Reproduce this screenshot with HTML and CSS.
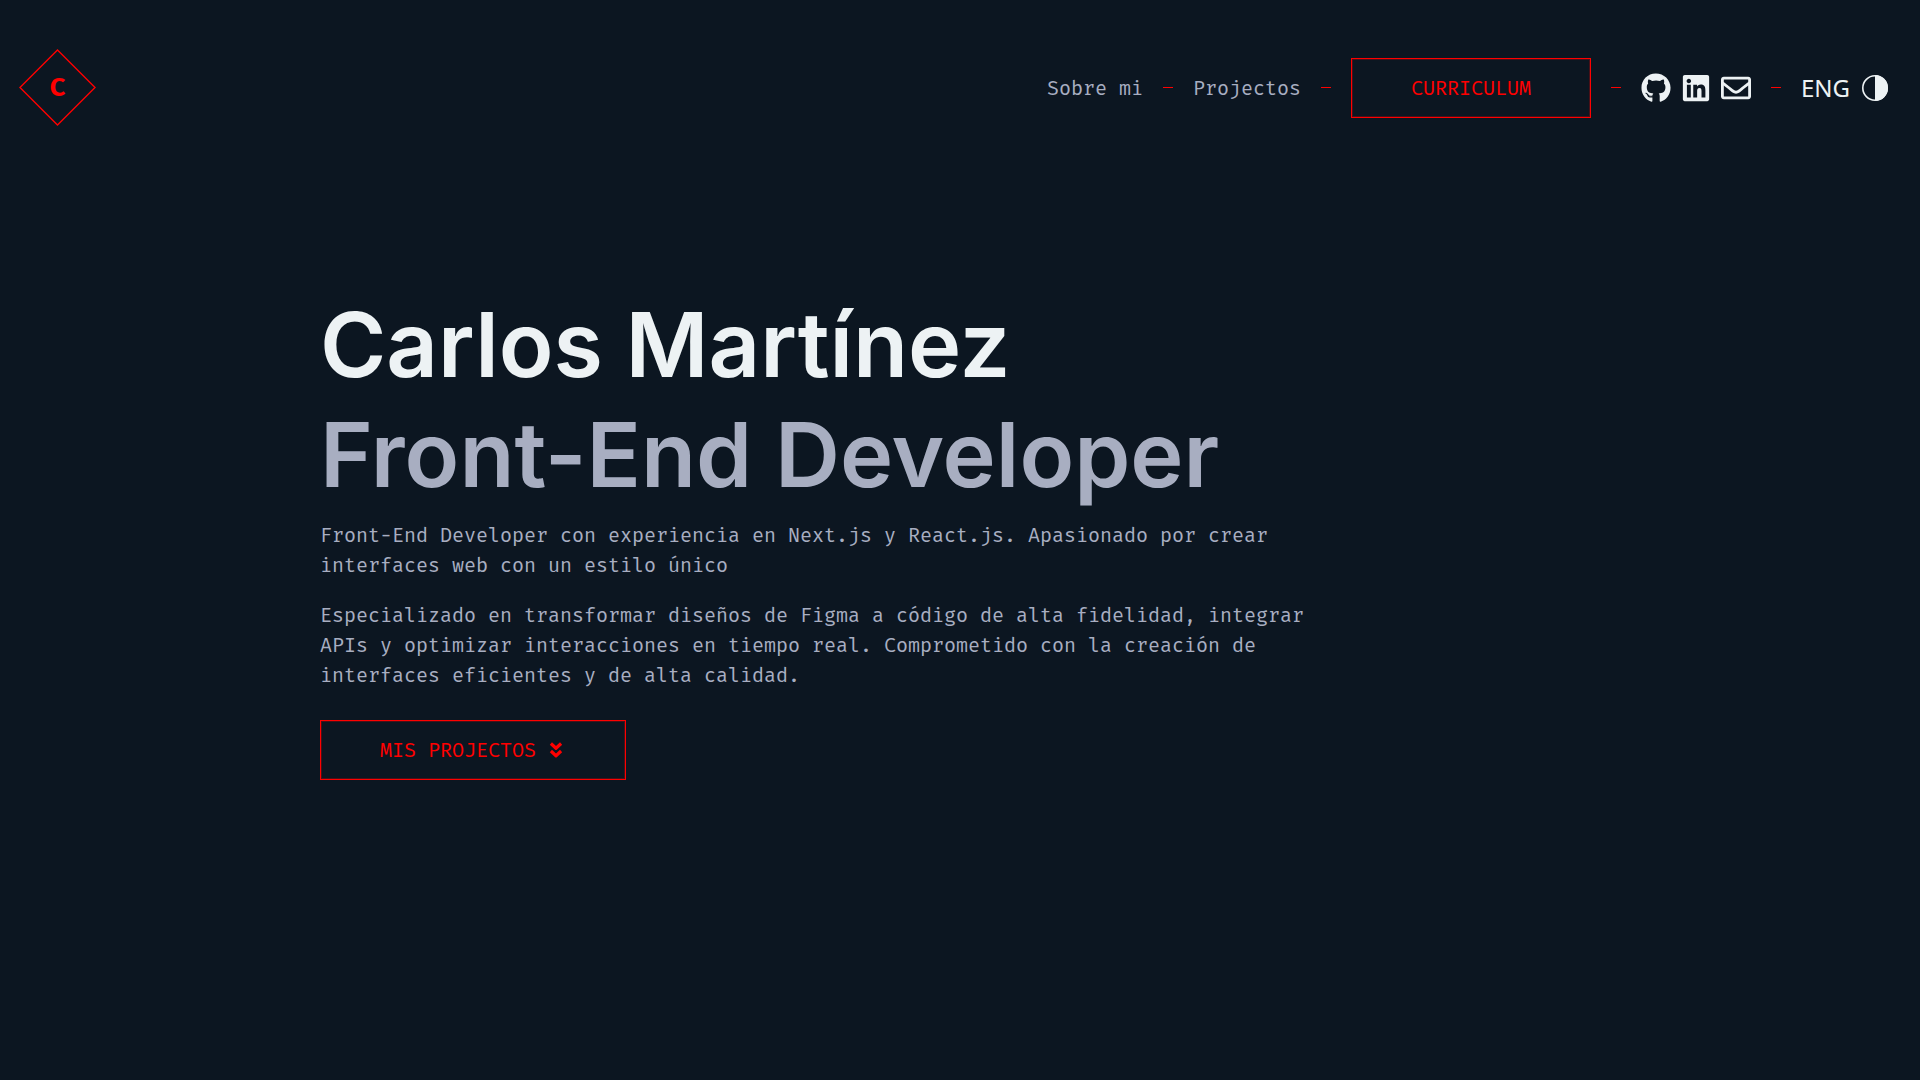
FILE: index.html
```html
<!DOCTYPE html>
<html lang="es">
<head>
<meta charset="utf-8">
<meta name="viewport" content="width=device-width, initial-scale=1">
<title>Carlos Martínez</title>
<link rel="stylesheet" href="styles.css">
</head>
<body>
<header class="header">
  <a class="logo" href="#">
    <svg class="logo-frame" viewBox="0 0 75 75" aria-hidden="true"><path d="M37.5 0 75 37.5 37.5 75 0 37.5Z" fill="none" stroke="currentColor" stroke-width="1.4"/></svg>
    <span class="logo-letter">C</span>
  </a>
  <nav class="nav">
    <a class="nav-link" href="#sobre-mi">Sobre mi</a>
    <span class="dash"></span>
    <a class="nav-link" href="#projectos">Projectos</a>
    <span class="dash"></span>
    <a class="button" href="#curriculum">CURRICULUM</a>
    <span class="dash"></span>
    <div class="group">
      <a class="icon-link" href="#github" aria-label="GitHub">
        <svg class="icon" viewBox="0 0 496 512"><path d="M165.9 397.4c0 2-2.3 3.6-5.2 3.6-3.3.3-5.6-1.3-5.6-3.6 0-2 2.3-3.6 5.2-3.6 3-.3 5.6 1.3 5.6 3.6zm-31.1-4.5c-.7 2 1.3 4.3 4.3 4.9 2.6 1 5.6 0 6.2-2s-1.3-4.3-4.3-5.2c-2.6-.7-5.5.3-6.2 2.3zm44.2-1.7c-2.9.7-4.9 2.6-4.6 4.9.3 2 2.9 3.3 5.9 2.6 2.9-.7 4.9-2.6 4.6-4.6-.3-1.9-3-3.2-5.9-2.9zM244.8 8C106.1 8 0 113.3 0 252c0 110.9 69.8 205.8 169.5 239.2 12.8 2.3 17.3-5.6 17.3-12.1 0-6.2-.3-40.4-.3-61.4 0 0-70 15-84.7-29.8 0 0-11.4-29.1-27.8-36.6 0 0-22.9-15.7 1.6-15.4 0 0 24.9 2 38.6 25.8 21.9 38.6 58.6 27.5 72.9 20.9 2.3-16 8.8-27.1 16-33.7-55.9-6.2-112.3-14.3-112.3-110.5 0-27.5 7.6-41.3 23.6-58.9-2.6-6.5-11.1-33.3 2.6-67.9 20.9-6.5 69 27 69 27 20-5.6 41.5-8.5 62.8-8.5s42.8 2.9 62.8 8.5c0 0 48.1-33.6 69-27 13.7 34.7 5.2 61.4 2.6 67.9 16 17.7 25.8 31.5 25.8 58.9 0 96.5-58.9 104.2-114.8 110.5 9.2 7.9 17 22.9 17 46.4 0 33.7-.3 75.4-.3 83.6 0 6.5 4.6 14.4 17.3 12.1C428.2 457.8 496 362.9 496 252 496 113.3 383.5 8 244.8 8z"/></svg>
      </a>
      <a class="icon-link" href="#linkedin" aria-label="LinkedIn">
        <svg class="icon" viewBox="0 0 448 512"><path d="M416 32H31.9C14.3 32 0 46.5 0 64.3v383.4C0 465.5 14.3 480 31.9 480H416c17.6 0 32-14.5 32-32.3V64.3c0-17.8-14.4-32.3-32-32.3zM135.4 416H69V202.2h66.5V416zm-33.2-243c-21.3 0-38.5-17.3-38.5-38.5S80.9 96 102.2 96c21.2 0 38.5 17.3 38.5 38.5 0 21.3-17.2 38.5-38.5 38.5zm282.1 243h-66.4V312c0-24.8-.5-56.7-34.5-56.7-34.6 0-39.9 27-39.9 54.9V416h-66.4V202.2h63.7v29.2h.9c8.9-16.8 30.6-34.5 62.9-34.5 67.2 0 79.7 44.3 79.7 101.9V416z"/></svg>
      </a>
      <a class="icon-link" href="#email" aria-label="Email">
        <svg class="icon" viewBox="0 0 512 512"><path d="M464 64H48C21.49 64 0 85.49 0 112v288c0 26.51 21.49 48 48 48h416c26.51 0 48-21.49 48-48V112c0-26.51-21.49-48-48-48zm0 48v40.805c-22.422 18.259-58.168 46.651-134.587 106.49-16.841 13.247-50.201 45.072-73.413 44.701-23.208.375-56.579-31.459-73.413-44.701C106.18 199.465 70.425 171.067 48 152.805V112h416zM48 400V214.398c22.914 18.251 55.409 43.862 104.938 82.646 21.857 17.205 60.134 55.186 103.062 54.955 42.717.231 80.509-37.199 103.053-54.947 49.528-38.783 82.032-64.401 104.947-82.653V400H48z"/></svg>
      </a>
    </div>
    <span class="dash"></span>
    <div class="group">
      <button class="language" type="button">ENG</button>
      <button class="icon-link" type="button" aria-label="Tema">
        <svg class="icon" viewBox="0 0 30 30"><circle cx="15" cy="15" r="12.2" fill="none" stroke="currentColor" stroke-width="1.6"/><path d="M15 2a13 13 0 0 1 0 26z"/></svg>
      </button>
    </div>
  </nav>
</header>
<main class="hero">
  <h1 class="title">Carlos Martínez<span class="role">Front-End Developer</span></h1>
  <div class="intro">
    <p>Front-End Developer con experiencia en Next.js y React.js. Apasionado por crear interfaces web con un estilo único</p>
    <p>Especializado en transformar diseños de Figma a código de alta fidelidad, integrar APIs y optimizar interacciones en tiempo real. Comprometido con la creación de interfaces eficientes y de alta calidad.</p>
  </div>
  <a class="button" href="#projectos">MIS PROJECTOS
    <svg class="chevrons" viewBox="0 0 20 20" aria-hidden="true"><path d="M4.9 3.5 10 8.2l5.1-4.7M4.9 11 10 15.7l5.1-4.7" fill="none" stroke="currentColor" stroke-width="3.2" stroke-linejoin="round"/></svg>
  </a>
</main>
</body>
</html>
```
FILE: styles.css
```css
:root {
  --background: #0c1621;
  --light: #edf2f4;
  --muted: #a8aec1;
  --accent: #ff0000;
  --mono: "Fira Mono", "DejaVu Sans Mono", monospace;
}

* {
  box-sizing: border-box;
}

body {
  margin: 0;
  min-height: 100vh;
  background: var(--background);
  color: var(--muted);
  font: 20px/30px var(--mono);
}

a {
  color: inherit;
  text-decoration: none;
}

button {
  padding: 0;
  border: 0;
  background: none;
  color: inherit;
}

.header {
  display: flex;
  align-items: center;
  justify-content: space-between;
  padding: 50px 30px 50px 20px;
}

.logo {
  display: grid;
  place-items: center;
  color: var(--accent);
}

.logo > * {
  grid-area: 1 / 1;
}

.logo-frame {
  width: 75px;
  height: 75px;
  overflow: visible;
}

.logo-letter {
  font-size: 26px;
  font-weight: 700;
}

.nav {
  display: flex;
  align-items: center;
  gap: 20px;
}

.dash {
  width: 10px;
  height: 1px;
  background: var(--accent);
}

.button {
  display: inline-flex;
  align-items: center;
  gap: 10px;
  height: 60px;
  padding: 0 59px;
  border: 1px solid var(--accent);
  box-shadow: inset 0 0 0 1px rgb(255 0 0 / 25%);
  color: var(--accent);
}

.group {
  display: flex;
  align-items: center;
  gap: 10px;
  color: var(--light);
}

.icon-link,
.icon {
  display: block;
  width: 30px;
  height: 30px;
}

.icon {
  fill: currentColor;
}

.language {
  font: 24px/30px "Noto Sans", sans-serif;
}

.hero {
  max-width: 1320px;
  margin: 0 auto;
  padding: 115px 20px 50px;
}

.title {
  margin: 0 0 10px;
  color: var(--light);
  font: 600 90px/110px Inter, sans-serif;
}

.role {
  display: block;
  color: var(--muted);
}

.intro {
  max-width: 1000px;
  margin-bottom: 30px;
}

.intro p {
  margin: 0 0 20px;
}

.chevrons {
  width: 20px;
  height: 20px;
}
```
